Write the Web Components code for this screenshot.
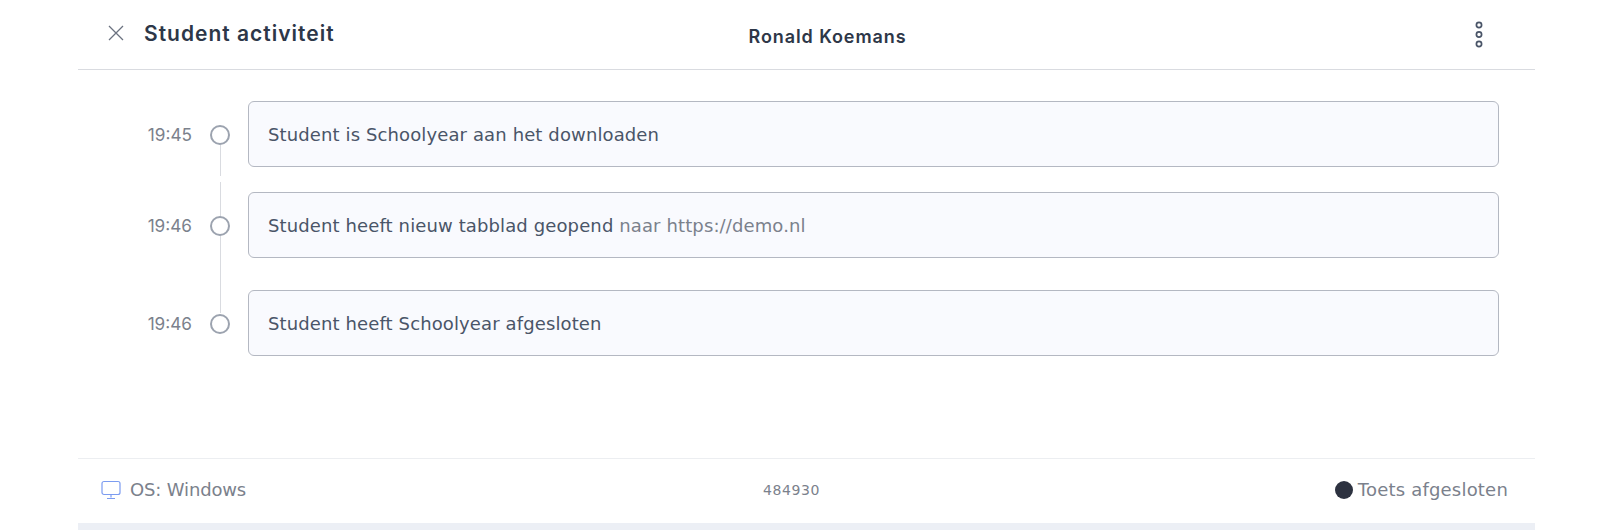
<!DOCTYPE html>
<html lang="nl">
<head>
<meta charset="utf-8">
<title>Student activiteit</title>
<style>
  html, body { margin: 0; background: #fff; }
  body { font-family: "DejaVu Sans", Inter, sans-serif; }
</style>
</head>
<body>
<activity-panel>
  <panel-header slot="header" student="Ronald Koemans">Student activiteit</panel-header>
  <timeline-item time="19:45" gap="25" line="first">Student is Schoolyear aan het downloaden</timeline-item>
  <timeline-item time="19:46" gap="32" line="middle">Student heeft nieuw tabblad geopend <span style="color:#7b818c">naar https://demo.nl</span></timeline-item>
  <timeline-item time="19:46" gap="0" line="last">Student heeft Schoolyear afgesloten</timeline-item>
  <panel-footer slot="footer" os="OS: Windows" code="484930" status="Toets afgesloten"></panel-footer>
</activity-panel>

<script>
class ActivityPanel extends HTMLElement {
  constructor() {
    super();
    this.attachShadow({ mode: 'open' });
    this.shadowRoot.innerHTML = `
      <style>
        :host { display: block; width: 1457px; height: 530px; margin-left: 78px; }
        .wrap { display: flex; flex-direction: column; height: 100%; background: #fff; }
        .list { flex: 1; display: flex; flex-direction: column; padding: 31px 36px 0 0; }
        .strip { height: 7px; background: #ecEff5; }
      </style>
      <div class="wrap">
        <slot name="header"></slot>
        <div class="list"><slot></slot></div>
        <slot name="footer"></slot>
        <div class="strip"></div>
      </div>
    `;
  }
}

class PanelHeader extends HTMLElement {
  constructor() {
    super();
    this.attachShadow({ mode: 'open' });
  }

  connectedCallback() {
    this.shadowRoot.innerHTML = `
      <style>
        :host { display: block; }
        .bar {
          display: grid;
          grid-template-columns: 1fr auto 1fr;
          align-items: center;
          height: 70px;
          box-sizing: border-box;
          padding: 0 52px 0 30px;
          border-bottom: 1px solid #d9dbe0;
        }
        .left { display: flex; align-items: center; gap: 20px; margin-top: -3px; }
        .left svg { width: 16px; height: 16px; display: block; margin-top: -1px; }
        .title { font-family: Inter, sans-serif; font-size: 21px; font-weight: 600; color: #2d3748; letter-spacing: 1px; white-space: nowrap; }
        .name { font-family: Inter, sans-serif; font-size: 18px; font-weight: 600; color: #2d3748; letter-spacing: 0.9px; margin: 3px 0 0 64px; white-space: nowrap; }
        .more { justify-self: end; display: block; }
      </style>
      <div class="bar">
        <div class="left">
          <svg viewBox="0 0 16 16" fill="none" stroke="#6b7280" stroke-width="1.3"><path d="M1 1l14 14M15 1L1 15"/></svg>
          <span class="title"><slot></slot></span>
        </div>
        <div class="name">${this.getAttribute('student')}</div>
        <svg class="more" width="8" height="27" viewBox="0 0 8 27" fill="none" stroke="#4a5568" stroke-width="1.7">
          <circle cx="4" cy="4" r="2.6"/><circle cx="4" cy="13.500" r="2.6"/><circle cx="4" cy="23" r="2.6"/>
        </svg>
      </div>
    `;
  }
}

class TimelineItem extends HTMLElement {
  constructor() {
    super();
    this.attachShadow({ mode: 'open' });
  }

  connectedCallback() {
    const gap = this.getAttribute('gap') || '0';
    const line = this.getAttribute('line');
    this.shadowRoot.innerHTML = `
      <style>
        :host { display: block; margin-bottom: ${gap}px; }
        .row { display: grid; grid-template-columns: 114px 56px 1fr; align-items: center; height: 66px; position: relative; }
        .time { font-family: Inter, sans-serif; font-size: 17.200px; color: #7b818c; text-align: right; margin-top: 1px; }
        .dot-cell { display: flex; justify-content: center; }
        .dot { width: 16px; height: 16px; border: 2px solid #9ca3af; border-radius: 50%; background: #fff; position: relative; z-index: 1; margin-top: 2px; }
        .line { position: absolute; left: 142px; width: 1px; background: #d9dbe0; }
        .first { top: 44px; height: 31px; }
        .middle { top: -10px; height: 131px; }
        .box {
          height: 66px;
          box-sizing: border-box;
          display: flex;
          align-items: center;
          padding: 0 19px;
          background: #f9fafe;
          border: 1px solid #b4b8c2;
          border-radius: 6px;
          font-size: 18px;
          letter-spacing: 0.12px;
          color: #4a5568;
        }
        .text { display: block; white-space: nowrap; }
      </style>
      <div class="row">
        ${line === 'last' ? '' : `<div class="line ${line}"></div>`}
        <div class="time">${this.getAttribute('time')}</div>
        <div class="dot-cell"><div class="dot"></div></div>
        <div class="box"><span class="text"><slot></slot></span></div>
      </div>
    `;
  }
}

class PanelFooter extends HTMLElement {
  constructor() {
    super();
    this.attachShadow({ mode: 'open' });
  }

  connectedCallback() {
    this.shadowRoot.innerHTML = `
      <style>
        :host { display: block; }
        .bar {
          display: grid;
          grid-template-columns: 1fr auto 1fr;
          align-items: center;
          height: 65px;
          box-sizing: border-box;
          padding: 0 27px 3px 23px;
          border-top: 1px solid #eceef1;
          color: #7b818c;
          font-size: 18px;
        }
        .os { display: flex; align-items: center; gap: 9px; letter-spacing: -0.15px; }
        .os svg { display: block; }
        .code { font-size: 14px; letter-spacing: 0.6px; margin-right: 26px; }
        .status { justify-self: end; display: flex; align-items: center; gap: 5px; letter-spacing: 0.2px; }
        .status i { width: 18px; height: 18px; border-radius: 50%; background: #2d3240; display: block; }
      </style>
      <div class="bar">
        <div class="os">
          <svg width="20" height="20" viewBox="0 0 20 20" fill="none" stroke="#7c9cf0" stroke-width="1.2">
            <rect x="1" y="1.500" width="18" height="13" rx="2"/>
            <path d="M10 14.500v3M6 18.500h8"/>
          </svg>
          <span>${this.getAttribute('os')}</span>
        </div>
        <div class="code">${this.getAttribute('code')}</div>
        <div class="status"><i></i><span>${this.getAttribute('status')}</span></div>
      </div>
    `;
  }
}

customElements.define('activity-panel', ActivityPanel);
customElements.define('panel-header', PanelHeader);
customElements.define('timeline-item', TimelineItem);
customElements.define('panel-footer', PanelFooter);
</script>
</body>
</html>
